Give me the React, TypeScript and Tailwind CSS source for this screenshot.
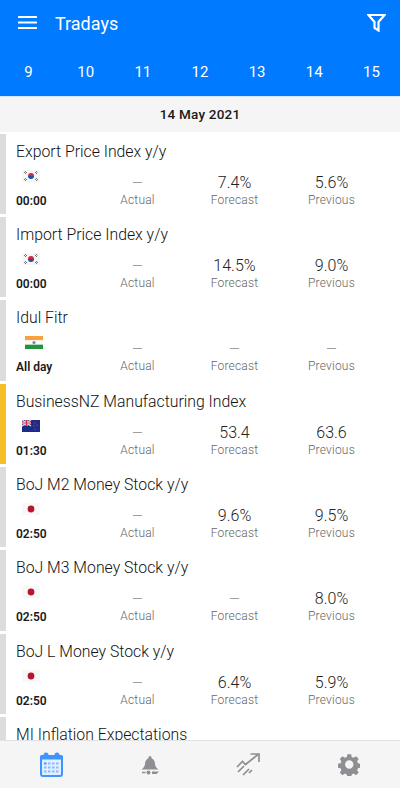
const DAYS = [9, 10, 11, 12, 13, 14, 15];

type FlagCode = "kr" | "in" | "nz" | "jp";

interface CalendarEvent {
  title: string;
  flag: FlagCode;
  time: string;
  actual: string;
  forecast: string;
  previous: string;
  important?: boolean;
  cutOff?: boolean;
}

const EVENTS: CalendarEvent[] = [
  { title: "Export Price Index y/y", flag: "kr", time: "00:00", actual: "—", forecast: "7.4%", previous: "5.6%" },
  { title: "Import Price Index y/y", flag: "kr", time: "00:00", actual: "—", forecast: "14.5%", previous: "9.0%" },
  { title: "Idul Fitr", flag: "in", time: "All day", actual: "—", forecast: "—", previous: "—" },
  { title: "BusinessNZ Manufacturing Index", flag: "nz", time: "01:30", actual: "—", forecast: "53.4", previous: "63.6", important: true },
  { title: "BoJ M2 Money Stock y/y", flag: "jp", time: "02:50", actual: "—", forecast: "9.6%", previous: "9.5%" },
  { title: "BoJ M3 Money Stock y/y", flag: "jp", time: "02:50", actual: "—", forecast: "—", previous: "8.0%" },
  { title: "BoJ L Money Stock y/y", flag: "jp", time: "02:50", actual: "—", forecast: "6.4%", previous: "5.9%" },
  { title: "MI Inflation Expectations", flag: "nz", time: "03:00", actual: "—", forecast: "—", previous: "—", cutOff: true },
];

function Flag({ code }: { code: FlagCode }) {
  if (code === "kr") {
    return (
      <svg width="18" height="12" viewBox="0 0 18 12">
        <rect width="18" height="12" fill="#f6f6f6" />
        <path d="M6 6a3 3 0 0 1 6 0z" fill="#d2283c" />
        <path d="M6 6a3 3 0 0 0 6 0z" fill="#1f4fa3" />
        <path d="M2 3l2-2M3 4l2-2M13 2l2 2M14 1l1.500 1.500M2 9l2 2M3 8l2 2M13 10l2-2M14 11l2-2" stroke="#555" strokeWidth="0.8" />
      </svg>
    );
  }
  if (code === "in") {
    return (
      <svg width="18" height="13" viewBox="0 0 18 13">
        <rect width="18" height="4.330" fill="#f9a13a" />
        <rect y="4.330" width="18" height="4.340" fill="#fafafa" />
        <rect y="8.670" width="18" height="4.330" fill="#21943c" />
        <circle cx="9" cy="6.500" r="1.600" fill="#7c84b8" />
      </svg>
    );
  }
  if (code === "nz") {
    return (
      <svg width="18" height="12" viewBox="0 0 18 12">
        <rect width="18" height="12" fill="#1f2c86" />
        <rect width="9" height="6" fill="#3a3f8e" />
        <path d="M0 0l9 6M9 0L0 6" stroke="#e9dbe6" strokeWidth="1.200" />
        <path d="M4.500 0v6M0 3h9" stroke="#f2e6ea" strokeWidth="2" />
        <path d="M4.500 0v6M0 3h9" stroke="#cf2b45" strokeWidth="1" />
        <circle cx="13" cy="3" r="0.600" fill="#d9475c" />
        <circle cx="15" cy="5" r="0.600" fill="#d9475c" />
        <circle cx="12" cy="6" r="0.600" fill="#d9475c" />
        <circle cx="13" cy="9.500" r="0.600" fill="#d9475c" />
      </svg>
    );
  }
  return (
    <svg width="18" height="12" viewBox="0 0 18 12">
      <rect width="18" height="12" fill="#f8f8f8" />
      <circle cx="9" cy="6" r="3.400" fill="#b8152e" />
    </svg>
  );
}

function Metric({ value, label }: { value: string; label: string }) {
  const empty = value === "—";
  return (
    <div className="flex w-[97px] flex-col items-center pt-[5px]">
      <span
        className={
          empty
            ? "h-[19px] text-[14px] leading-[20px] font-light text-[#8a8a8a]"
            : "h-[19px] text-[16px] leading-[20px] font-light text-[#222222]"
        }
      >
        {value}
      </span>
      <span className="text-[12px] leading-[16px] font-light tracking-[0.2px] text-[#666666]">{label}</span>
    </div>
  );
}

function EventRow({ event }: { event: CalendarEvent }) {
  return (
    <div className="flex h-[80.33px] shrink-0 bg-white">
      <div className={event.important ? "w-[6px] bg-[#f4bf27]" : "w-[6px] bg-[#dcdcdc]"} />
      <div className="flex-1 pl-[10px]">
        <div className="pt-[8px] text-[15.8px] leading-[20px] font-light text-[#111111]">{event.title}</div>
        {!event.cutOff && (
          <div className="mt-[6px] flex">
            <div className="w-[73px]">
              <div className="flex w-fit flex-col items-center">
                <div className="flex h-[16px] items-center">
                  <Flag code={event.flag} />
                </div>
                <div className="mt-[9px] text-[12px] leading-[16px] font-semibold text-[#1a1a1a]">{event.time}</div>
              </div>
            </div>
            <Metric value={event.actual} label="Actual" />
            <Metric value={event.forecast} label="Forecast" />
            <Metric value={event.previous} label="Previous" />
          </div>
        )}
      </div>
    </div>
  );
}

export default function App() {
  return (
    <div className="flex h-[788px] w-[400px] flex-col overflow-hidden bg-white font-['Roboto',sans-serif]">
      <header className="h-[96px] shrink-0 bg-[#007aff] text-white">
        <div className="flex h-[48px] items-center pr-[14px] pl-[18px]">
          <svg width="19" height="14" viewBox="0 0 19 14" fill="#ffffff" className="mt-[-2px]">
            <rect y="0" width="19" height="2" rx="0.500" />
            <rect y="5.500" width="19" height="2" rx="0.500" />
            <rect y="11" width="19" height="2" rx="0.500" />
          </svg>
          <span className="ml-[18px] text-[18px] leading-none">Tradays</span>
          <svg className="mt-[-3px] ml-auto" width="19" height="18" viewBox="0 0 19 18" fill="none" stroke="#ffffff" strokeWidth="2.200" strokeLinejoin="miter">
            <path d="M1.500 1h16l-6 7v8.500l-4-2.500V8z" />
          </svg>
        </div>
        <div className="grid h-[48px] grid-cols-7 items-center">
          {DAYS.map((day) => (
            <span key={day} className="text-center text-[15px] leading-none">
              {day}
            </span>
          ))}
        </div>
      </header>
      <div className="h-[1px] shrink-0 bg-[#d4e6fb]" />
      <div className="flex h-[35px] shrink-0 items-center justify-center bg-[#f5f5f5] text-[13.5px] font-medium tracking-[0.2px] text-[#1a1a1a]">
        14 May 2021
      </div>
      <main className="flex min-h-0 flex-1 flex-col gap-[3px] overflow-hidden bg-white pt-[1.6px]">
        {EVENTS.map((event) => (
          <EventRow key={event.title} event={event} />
        ))}
      </main>
      <nav className="flex h-[48px] shrink-0 items-center justify-between border-t border-[#e2e2e2] bg-[#f5f5f5] pr-[40px] pl-[40px]">
        <svg width="23" height="25" viewBox="0 0 23 25">
          <rect x="1" y="4" width="21" height="20" rx="2" fill="#e3efff" stroke="#3d96ff" strokeWidth="2" />
          <path d="M0 5a2 2 0 0 1 2-2h19a2 2 0 0 1 2 2v2.500H0z" fill="#3d96ff" />
          <circle cx="6" cy="3" r="2.500" fill="#3d96ff" />
          <circle cx="17" cy="3" r="2.500" fill="#3d96ff" />
          <g fill="#86bcff">
            <rect x="4" y="10.500" width="2.500" height="2" fill="#3d96ff" />
            <rect x="8" y="10.500" width="2.500" height="2" />
            <rect x="12" y="10.500" width="2.500" height="2" />
            <rect x="16" y="10.500" width="2.500" height="2" />
            <rect x="4" y="14.500" width="2.500" height="2" />
            <rect x="8" y="14.500" width="2.500" height="2" />
            <rect x="12" y="14.500" width="2.500" height="2" />
            <rect x="16" y="14.500" width="2.500" height="2" />
            <rect x="4" y="18.500" width="2.500" height="2" />
            <rect x="8" y="18.500" width="2.500" height="2" />
            <rect x="12" y="18.500" width="2.500" height="2" />
            <rect x="16" y="18.500" width="2.500" height="2" />
          </g>
        </svg>
        <svg width="18" height="20" viewBox="0 0 18 20" fill="#8e8e93">
          <path d="M7.500 2.500a1.500 1.500 0 0 1 3 0v.8c2.200.7 3.200 2.700 3.400 5 .2 2.300.8 4.300 3.600 6.200H.5c2.800-1.900 3.400-3.900 3.600-6.200.2-2.300 1.200-4.300 3.400-5z" />
          <circle cx="7.500" cy="17.500" r="2" />
          <path d="M1 16.800h3.500v1.400H1zM11 16.500h7l-2.500 2.400H11z" />
        </svg>
        <svg width="24" height="23" viewBox="0 0 24 23" fill="none" stroke="#8e8e93" strokeWidth="1.700">
          <path d="M1 14l5.500-5.500 3 3L22 1.500" />
          <path d="M14.500 1H23v8" />
          <path d="M2 19l6-6M7 22l6-6M13 20l3-3" />
        </svg>
        <svg width="22.500" height="23" viewBox="0 0 24 24" fill="#8e8e93">
          <path
            fillRule="evenodd"
            d="M10 1h4l.6 3 2.100.9 2.600-1.700 2.800 2.800-1.700 2.600.9 2.100 3 .6v4l-3 .6-.9 2.100 1.700 2.600-2.800 2.800-2.600-1.700-2.100.9-.6 3h-4l-.6-3-2.100-.9-2.600 1.700-2.800-2.800 1.700-2.600-.9-2.100-3-.6v-4l3-.6.900-2.100-1.700-2.600 2.800-2.800 2.600 1.700 2.100-.9zM12 7.500a4.500 4.500 0 1 0 0 9 4.500 4.500 0 0 0 0-9z"
          />
        </svg>
      </nav>
    </div>
  );
}
